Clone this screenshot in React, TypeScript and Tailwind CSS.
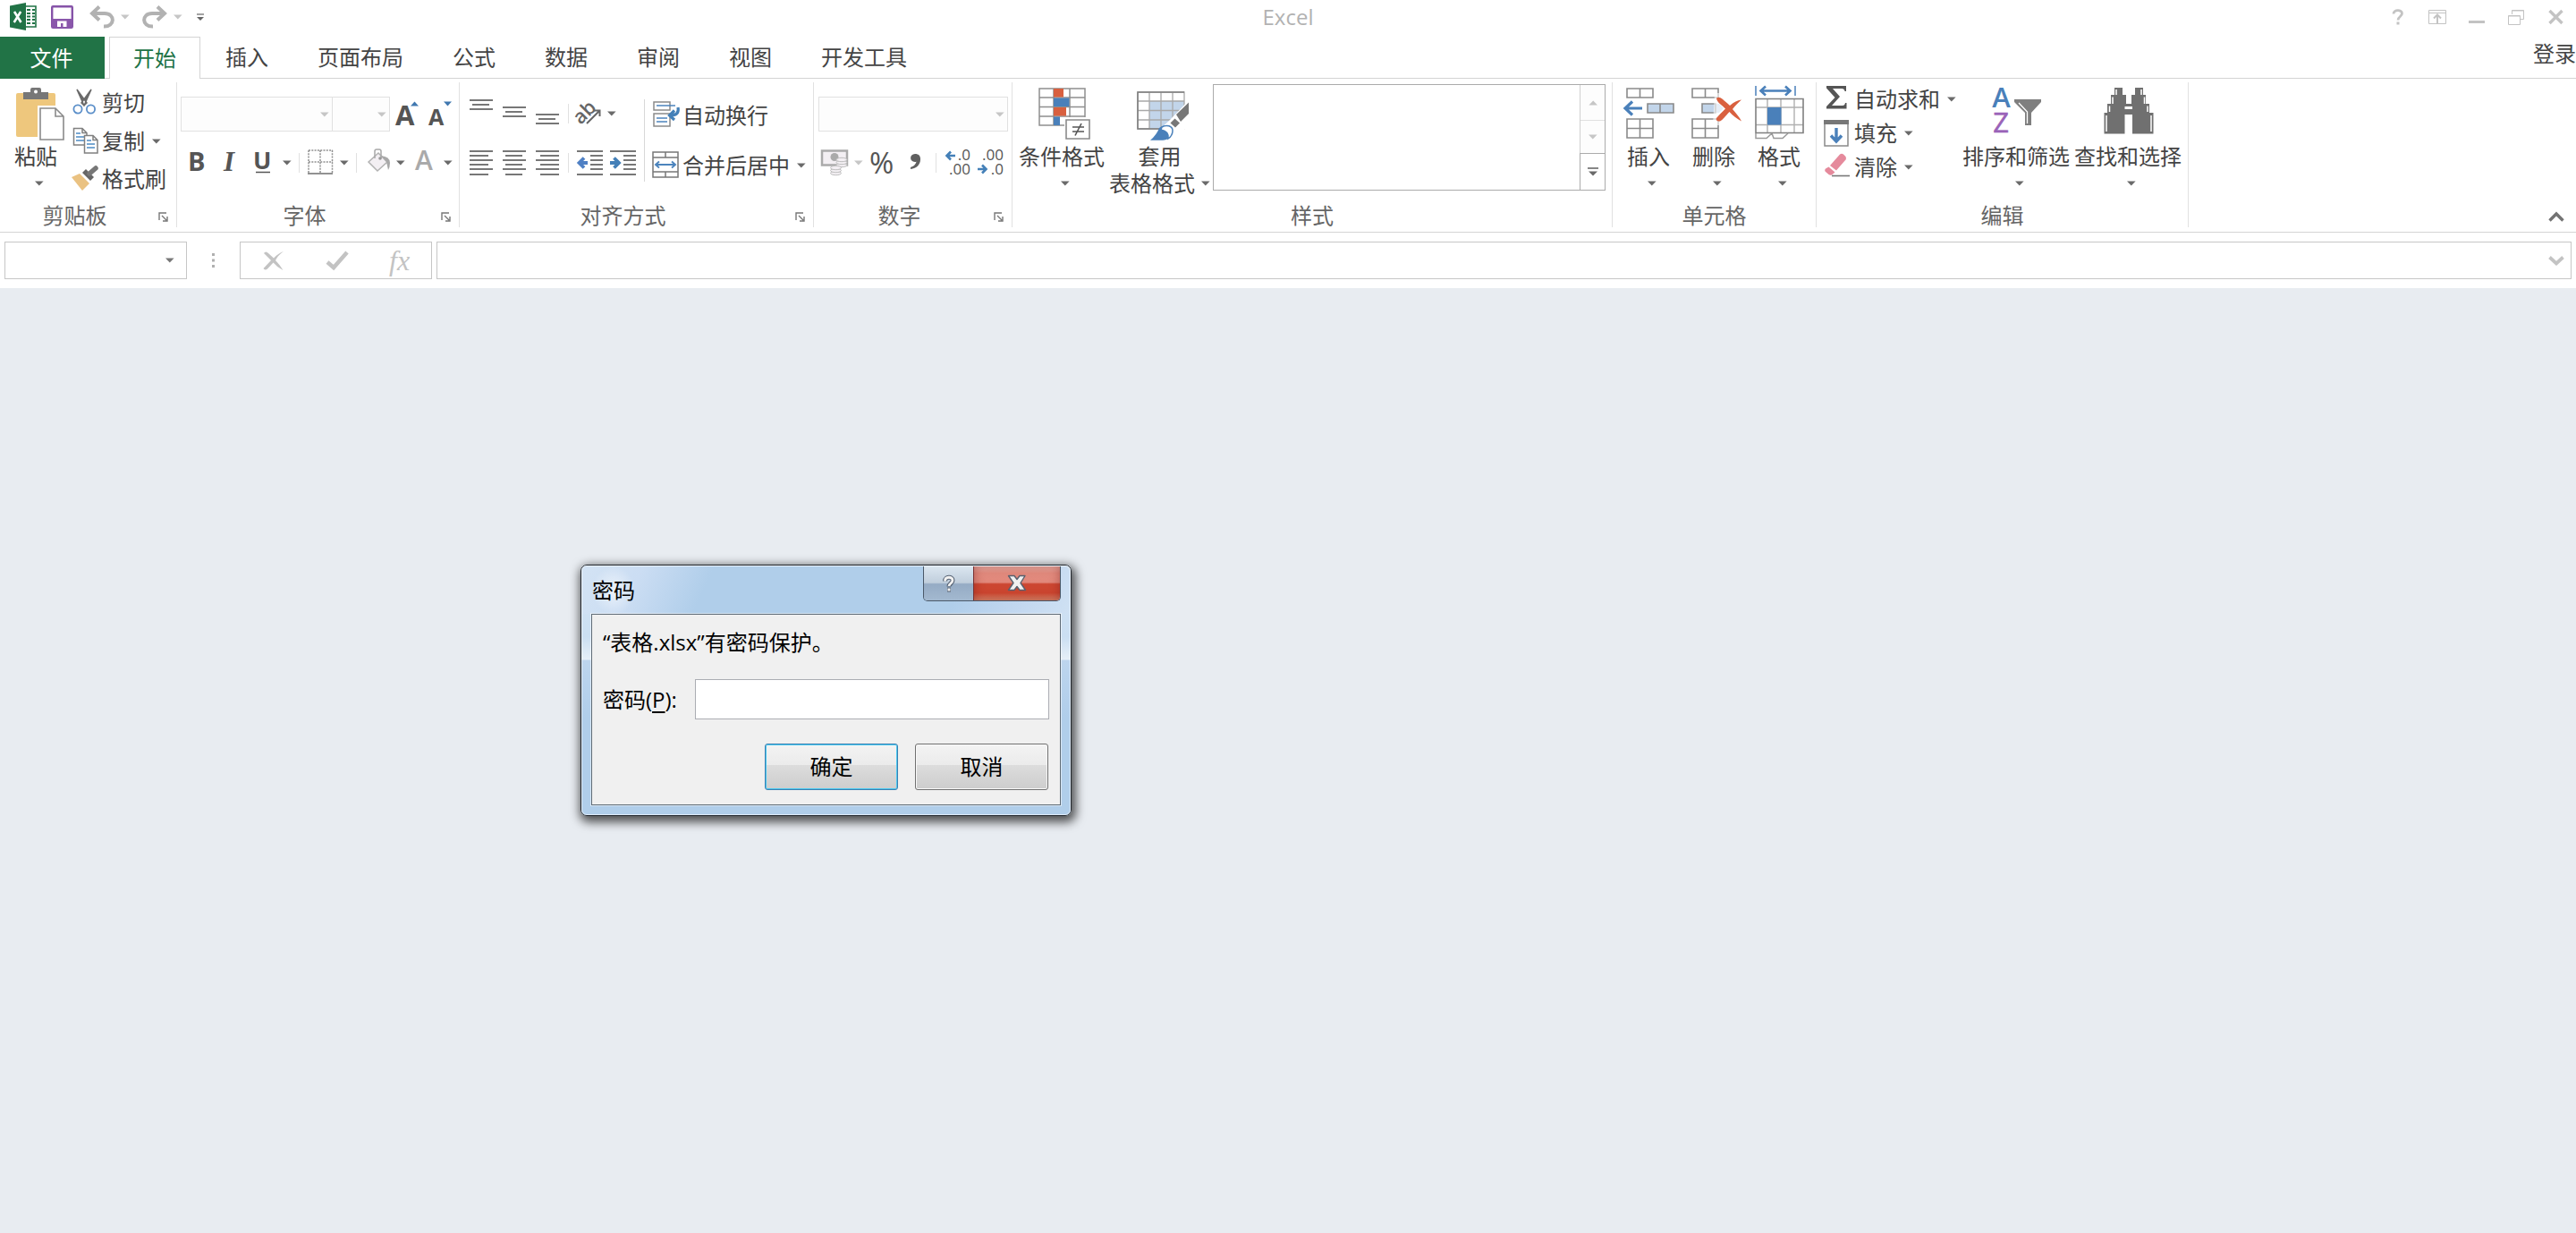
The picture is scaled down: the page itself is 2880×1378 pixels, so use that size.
import React from "react";

type Kids = { children?: React.ReactNode };

function Caret({ cls = "", color = "#6a6a6a" }: { cls?: string; color?: string }) {
  return (
    <svg width="10" height="6" viewBox="0 0 10 6" className={`shrink-0 ${cls}`} aria-hidden="true">
      <path d="M0 0.5H9.6L4.8 5.5Z" fill={color} />
    </svg>
  );
}

function Icon({ children, w = 30, h = 30, cls = "" }: Kids & { w?: number; h?: number; cls?: string }) {
  return (
    <svg width={w} height={h} viewBox={`0 0 ${w} ${h}`} fill="none" className={`shrink-0 overflow-visible ${cls}`} aria-hidden="true">
      {children}
    </svg>
  );
}

function Tool({ label, children, cls = "" }: Kids & { label: string; cls?: string }) {
  return (
    <button type="button" aria-label={label} className={`flex shrink-0 items-center ${cls}`}>
      {children}
    </button>
  );
}

function BigButton({ label, icon, children }: Kids & { label?: string; icon: React.ReactNode }) {
  return (
    <button type="button" className="flex shrink-0 flex-col items-center pt-1 text-2xl leading-[30px] text-[#444]">
      <Icon w={64} h={62} cls="mb-0.5">
        {icon}
      </Icon>
      {label ? (
        <>
          <span className="whitespace-nowrap">{label}</span>
          <span className="flex h-[30px] items-center pl-2">
            <Caret />
          </span>
        </>
      ) : (
        children
      )}
    </button>
  );
}

function RowButton({ label, icon, caret, cls = "" }: { label: string; icon: React.ReactNode; caret?: boolean; cls?: string }) {
  return (
    <button type="button" className={`flex items-center gap-1 text-2xl leading-[30px] whitespace-nowrap text-[#444] ${cls}`}>
      <Icon>{icon}</Icon>
      {label}
      {caret && <Caret cls="ml-1" />}
    </button>
  );
}

function Group({ title, launcher, children }: Kids & { title: string; launcher?: boolean }) {
  return (
    <section aria-label={title} className="flex shrink-0 flex-col border-r border-[#e1e1e1]">
      <div className="flex h-[136px] items-start">{children}</div>
      <div className="flex h-[26px] items-center">
        <h2 className="flex-1 text-center text-2xl leading-[26px] text-[#666]">{title}</h2>
        {launcher && (
          <button type="button" aria-label={`${title}设置`} className="w-[30px] pt-1 pl-2.5">
            <Icon w={12} h={12}>
              <path d="M1 9V1H9M4 4L9 9M10 5V10H5" stroke="#777" strokeWidth="1.4" />
            </Icon>
          </button>
        )}
      </div>
    </section>
  );
}

function Combo({ label, cls }: { label: string; cls: string }) {
  return (
    <div className={`relative h-[39px] ${cls}`}>
      <select aria-label={label} className="size-full appearance-none border border-[#e1e1e1] bg-[#fdfdfd]" />
      <span className="pointer-events-none absolute inset-y-0 right-1 flex items-center">
        <Caret color="#c6c6c6" />
      </span>
    </div>
  );
}

const Sep = () => <span className="mx-2 h-[22px] w-px shrink-0 bg-[#e1e1e1]" />;

function Lines({ rows }: { rows: [number, number, number][] }) {
  return (
    <Icon>
      {rows.map(([x1, x2, y]) => (
        <path key={y} d={`M${x1} ${y}H${x2}`} stroke="#777" strokeWidth="2" />
      ))}
    </Icon>
  );
}

function CellsGrid({ x }: { x: number }) {
  return (
    <g stroke="#8a8a8a" strokeWidth="1.6">
      <path d={`M${x} 3H${x + 29}V13H${x}ZM${x + 14.5} 3V13`} />
      <path d={`M${x} 37H${x + 29}V58H${x}ZM${x + 14.5} 37V58M${x} 47.5H${x + 29}`} />
    </g>
  );
}

function TitleBar() {
  const idle = "#b2b2b2";
  return (
    <header className="grid h-[41px] grid-cols-[1fr_auto_1fr] items-center">
      <div className="flex items-center pb-1 pl-[11px]">
        <Icon w={31} h={31}>
          <path d="M17 4H29V27H17" fill="#fff" stroke="#217346" strokeWidth="1.6" />
          <path d="M19 8H23M25 8H28M19 12H23M25 12H28M19 15.5H23M25 15.5H28M19 19H23M25 19H28M19 23H23M25 23H28" stroke="#217346" strokeWidth="2" />
          <path d="M0 3.5L18 0V31L0 27.5Z" fill="#217346" />
          <path d="M5 10L12.5 22M12.2 10L4.7 22" stroke="#fff" strokeWidth="2.6" />
        </Icon>
        <Tool label="保存" cls="ml-[15px]">
          <Icon w={25} h={26}>
            <rect x="1.2" y="1.2" width="22.6" height="23.6" rx="1" fill="#fff" stroke="#8653a8" strokeWidth="2.4" />
            <path d="M1 15H24V25H1Z" fill="#8a57ab" />
            <path d="M7 17.5H17.5V24H13.5V20H11V24H7Z" fill="#fff" />
          </Icon>
        </Tool>
        <Tool label="撤消" cls="ml-[18px]">
          <Icon w={28} h={26}>
            <path d="M2 9H17C29 9 29 24 16 23.5" stroke={idle} strokeWidth="4" />
            <path d="M11 1.5L3 9L11 16.5" stroke={idle} strokeWidth="4" />
          </Icon>
          <Caret cls="ml-[7px]" color="#c6c6c6" />
        </Tool>
        <Tool label="恢复" cls="ml-3.5">
          <Icon w={28} h={26}>
            <path d="M26 9H11C-1 9 -1 24 12 23.5" stroke={idle} strokeWidth="4" />
            <path d="M17 1.5L25 9L17 16.5" stroke={idle} strokeWidth="4" />
          </Icon>
          <Caret cls="ml-[7px]" color="#c6c6c6" />
        </Tool>
        <Tool label="自定义快速访问工具栏" cls="ml-4">
          <Icon w={8} h={8}>
            <path d="M0 1H8" stroke="#666" strokeWidth="1.2" />
            <path d="M0 4H8L4 8Z" fill="#666" />
          </Icon>
        </Tool>
      </div>
      <h1 className="pb-1 text-2xl leading-8 text-[#b2b2b2]">Excel</h1>
      <div className="flex items-center justify-end pr-[14px] pb-1 text-[#c3c3c3]">
        <Tool label="帮助">
          <Icon w={14} h={18}>
            <path d="M2 5.5C2 0.5 11.5 0.5 11.5 5C11.5 8.5 7 8.5 7 12.5" stroke="currentColor" strokeWidth="2.8" />
            <path d="M5.5 14.5H8.5V17.5H5.5Z" fill="currentColor" />
          </Icon>
        </Tool>
        <Tool label="功能区显示选项" cls="ml-[27px]">
          <Icon w={20} h={16}>
            <path d="M0.5 0.5H19.5V15.5H0.5ZM0.5 3.5H19.5" stroke="currentColor" />
            <path d="M10 15V6M6 9.5L10 5.5L14 9.5" stroke="currentColor" strokeWidth="2" />
          </Icon>
        </Tool>
        <Tool label="最小化" cls="ml-[25px]">
          <Icon w={18} h={18}>
            <path d="M0 14.5H18" stroke="currentColor" strokeWidth="3" />
          </Icon>
        </Tool>
        <Tool label="还原" cls="ml-[26px]">
          <Icon w={18} h={18}>
            <path d="M4.5 6V1.5H17.5V11.5H14M4.5 2H17.5M0.5 7.5H13.5V17.5H0.5ZM0.5 8H13.5" stroke="currentColor" />
          </Icon>
        </Tool>
        <Tool label="关闭" cls="ml-[27px]">
          <Icon w={17} h={16}>
            <path d="M1.5 1L15.5 15M15.5 1L1.5 15" stroke="currentColor" strokeWidth="3.4" />
          </Icon>
        </Tool>
      </div>
    </header>
  );
}

function TabRow() {
  const tabs = ["插入", "页面布局", "公式", "数据", "审阅", "视图", "开发工具"];
  return (
    <nav aria-label="功能区选项卡" className="flex h-[47px] border-b border-[#d4d4d4] text-2xl text-[#444]">
      <button type="button" className="-mb-px w-[117px] bg-[#217346] pr-0.5 text-white">文件</button>
      <button type="button" className="-mb-px ml-[5px] border border-b-0 border-[#d4d4d4] bg-white px-[26px] text-[#217346]">开始</button>
      <div className="ml-px flex gap-px">
        {tabs.map((t) => (
          <button key={t} type="button" className="px-[27px]">{t}</button>
        ))}
      </div>
      <a href="#login" className="ml-auto leading-[38px]">登录</a>
    </nav>
  );
}

function Ribbon() {
  return (
    <div className="flex border-b border-[#d4d4d4] pt-1 pb-[5px]">
      <Group title="剪贴板" launcher>
        <div className="flex pr-[11px] pl-2">
          <BigButton
            label="粘贴"
            icon={
              <>
                <rect x="10" y="8" width="44" height="49" rx="2" fill="#eec77d" />
                <path d="M18 15V7H26V4Q26 2 28 2H36Q38 2 38 4V7H46V15Z" fill="#777" />
                <circle cx="32" cy="6.5" r="2" fill="#fff" />
                <path d="M34 22H57L66 31V63H34Z" fill="#fff" />
                <path d="M37 25H54L63 34V60H37ZM54 25V34H63" fill="#fff" stroke="#8a8a8a" strokeWidth="1.6" />
              </>
            }
          />
          <div className="flex flex-col pt-px pl-2">
            <RowButton
              label="剪切"
              cls="h-[43px]"
              icon={
                <>
                  <path d="M6 0L17 15L14 18Z M22 0L11 15L14 18Z" fill="#6a6a6a" stroke="#6a6a6a" strokeWidth="1.5" />
                  <circle cx="7" cy="22" r="4.6" stroke="#5b8fc9" strokeWidth="1.8" />
                  <circle cx="21.5" cy="22" r="4.6" stroke="#5b8fc9" strokeWidth="1.8" />
                </>
              }
            />
            <RowButton
              label="复制"
              caret
              cls="h-[43px] pr-1"
              icon={
                <>
                  <path d="M2.5 0.5H12L17 5.5V19H2.5ZM12 0.5V5.5H17" fill="#fff" stroke="#808080" strokeWidth="1.5" />
                  <path d="M5 6H10M5 10H14M5 14H14" stroke="#4c8ac4" strokeWidth="1.5" />
                  <path d="M14.5 8.5H24L29 13.5V28H14.5ZM24 8.5V13.5H29" fill="#fff" stroke="#808080" strokeWidth="1.5" />
                  <path d="M17 14H22M17 18H26M17 22H26" stroke="#4c8ac4" strokeWidth="1.5" />
                </>
              }
            />
            <RowButton
              label="格式刷"
              cls="h-[42px]"
              icon={
                <>
                  <path d="M0 13L9 9L20 20L12 28Z" fill="#eac282" />
                  <path d="M12 8L16 4L25 13L21 17Z" fill="#666" />
                  <path d="M20 9L27 3" stroke="#777" strokeWidth="5.5" strokeLinecap="round" />
                </>
              }
            />
          </div>
        </div>
      </Group>

      <Group title="字体" launcher>
        <div className="pt-4 pr-1 pl-1">
          <div className="flex items-center">
            <Combo label="字体" cls="w-[170px]" />
            <Combo label="字号" cls="-ml-px w-[65px]" />
            <Tool label="增大字号" cls="ml-1.5">
              <Icon>
                <text x="0" y="27" fontSize="31" fontWeight="700" fill="#555" className="font-['Open_Sans']">A</text>
                <path d="M17 5.5L21.5 0.5L26 5.5Z" fill="#4178b0" />
              </Icon>
            </Tool>
            <Tool label="减小字号" cls="ml-[7px]">
              <Icon>
                <text x="0" y="27" fontSize="25" fontWeight="700" fill="#555" className="font-['Open_Sans']">A</text>
                <path d="M17 0.5H26L21.5 5.5Z" fill="#4178b0" />
              </Icon>
            </Tool>
          </div>
          <div className="mt-5 flex items-center pl-[5px]">
            <Tool label="加粗">
              <Icon>
                <text x="3" y="24" fontSize="29" fontWeight="700" fill="#555" className="font-['Open_Sans']">B</text>
              </Icon>
            </Tool>
            <Tool label="倾斜" cls="ml-[7px]">
              <Icon>
                <text x="6" y="24" fontSize="31" fontWeight="700" fontStyle="italic" fill="#555" className="font-['Liberation_Serif']">I</text>
              </Icon>
            </Tool>
            <Tool label="下划线" cls="ml-[7px]">
              <Icon>
                <text x="2" y="22" fontSize="27" fontWeight="700" fill="#555" className="font-['Open_Sans']">U</text>
                <path d="M5 25.5H21" stroke="#555" strokeWidth="1.5" />
              </Icon>
              <Caret cls="ml-[5px]" />
            </Tool>
            <Sep />
            <Tool label="边框">
              <Icon>
                <path d="M2 1H29M2 14H29M2 1V26M15 1V26M28.5 1V26" stroke="#909090" strokeWidth="1.5" strokeDasharray="2 1.3" />
                <path d="M1 27H29" stroke="#777" strokeWidth="1.6" />
              </Icon>
              <Caret cls="ml-[7px]" />
            </Tool>
            <Sep />
            <Tool label="填充颜色">
              <Icon>
                <path d="M5 14L16 4L26 14L15 24Z" fill="#f3eff3" stroke="#b2b2b2" strokeWidth="1.5" />
                <path d="M12 10V2Q12 0 14 0H17Q19 0 19 2V10" stroke="#a8a8a8" strokeWidth="1.5" />
                <circle cx="18" cy="10" r="1.8" fill="#999" />
                <path d="M19 7Q29 8 29 15Q29 20 27 23Q26 18 25 14Z" fill="#a8a8a8" />
              </Icon>
              <Caret cls="ml-1.5" />
            </Tool>
            <Tool label="字体颜色" cls="ml-1.5">
              <Icon>
                <text x="5" y="23" fontSize="30" fontWeight="600" fill="#aaa" className="font-['Open_Sans']">A</text>
              </Icon>
              <Caret cls="ml-[7px]" />
            </Tool>
          </div>
        </div>
      </Group>

      <Group title="对齐方式" launcher>
        <div className="flex pr-2 pl-[9px]">
          <div className="pt-5">
            <div className="flex items-center">
              <div className="flex gap-[7px]">
                <Tool label="顶端对齐"><Lines rows={[[2, 28, 0], [5, 24, 5], [2, 28, 10]]} /></Tool>
                <Tool label="垂直居中"><Lines rows={[[2, 28, 8], [5, 24, 13], [2, 28, 18]]} /></Tool>
                <Tool label="底端对齐"><Lines rows={[[2, 28, 16], [5, 24, 21], [2, 28, 26]]} /></Tool>
              </div>
              <Sep />
              <Tool label="方向">
                <Icon>
                  <text x="-1" y="23" fontSize="22" fontWeight="600" fill="#666" transform="rotate(-45 8 18)" className="font-['Open_Sans']">ab</text>
                  <path d="M12 26L26 12M20 11.5H26.5V18" stroke="#666" strokeWidth="2" />
                </Icon>
                <Caret cls="ml-[5px]" />
              </Tool>
            </div>
            <div className="mt-[25px] flex items-center">
              <div className="flex gap-[7px]">
                <Tool label="左对齐"><Lines rows={[[2, 28, 2], [2, 23, 7], [2, 28, 12], [2, 23, 17], [2, 28, 22], [2, 23, 28]]} /></Tool>
                <Tool label="居中"><Lines rows={[[2, 28, 2], [5, 24, 7], [2, 28, 12], [5, 24, 17], [2, 28, 22], [5, 24, 28]]} /></Tool>
                <Tool label="右对齐"><Lines rows={[[2, 28, 2], [7, 28, 7], [2, 28, 12], [7, 28, 17], [2, 28, 22], [7, 28, 28]]} /></Tool>
              </div>
              <Sep />
              <Tool label="减少缩进量">
                <Icon>
                  <path d="M1 2H30M16 7H30M16 12H30M16 17H30M16 22H30M1 28H30" stroke="#777" strokeWidth="1.8" />
                  <path d="M3 15H13M9 9.5L3.5 15L9 20.5" stroke="#4f80c4" strokeWidth="3.8" />
                </Icon>
              </Tool>
              <Tool label="增加缩进量" cls="ml-[7px]">
                <Icon>
                  <path d="M1 2H30M16 7H30M16 12H30M16 17H30M16 22H30M1 28H30" stroke="#777" strokeWidth="1.8" />
                  <path d="M1 15H11M5.5 9.5L11 15L5.5 20.5" stroke="#4480b8" strokeWidth="3.8" />
                </Icon>
              </Tool>
            </div>
          </div>
          <span className="mt-[19px] mr-2 ml-[9px] h-[92px] w-px bg-[#d8d8d8]" />
          <div className="flex flex-col gap-[26px] pt-[22px]">
            <RowButton
              label="自动换行"
              icon={
                <>
                  <path d="M2 0H20V9H2ZM2 13H20V27H2Z" stroke="#8a8a8a" strokeWidth="1.5" />
                  <path d="M5 4H26M5 18H17M5 22H17" stroke="#4c84bd" strokeWidth="1.6" />
                  <path d="M29 6Q31 15 20 15M25 9.5L19.5 15L25 20" stroke="#4480b8" strokeWidth="3.2" />
                </>
              }
            />
            <RowButton
              label="合并后居中"
              caret
              icon={
                <>
                  <path d="M1 0H29V28H1ZM1 6H29M1 22H29M15 0V6M15 22V28" stroke="#777" strokeWidth="1.5" />
                  <path d="M4 14H26M8 10.5L4 14L8 17.5M22 10.5L26 14L22 17.5" stroke="#4c84bd" strokeWidth="1.9" />
                </>
              }
            />
          </div>
        </div>
      </Group>

      <Group title="数字" launcher>
        <div className="pt-4 pr-1 pl-[5px]">
          <Combo label="数字格式" cls="w-[212px]" />
          <div className="mt-5 flex items-center pl-[3px]">
            <Tool label="会计数字格式">
              <Icon>
                <rect x="1" y="1.5" width="28" height="16" fill="#f3eff3" stroke="#aaa" strokeWidth="2.5" />
                <circle cx="15" cy="8.5" r="4.5" fill="#aaa" />
                <g fill="#f3eff3" stroke="#bdbdbd">
                  <ellipse cx="23" cy="17.5" rx="6" ry="2.2" />
                  <ellipse cx="23" cy="14.5" rx="6" ry="2.2" />
                  <ellipse cx="23" cy="11.5" rx="6" ry="2.2" />
                  <ellipse cx="16.5" cy="26.5" rx="6" ry="2.2" />
                  <ellipse cx="16.5" cy="23.5" rx="6" ry="2.2" />
                  <ellipse cx="16.5" cy="20.5" rx="6" ry="2.2" />
                </g>
              </Icon>
              <Caret cls="ml-[7px]" color="#c6c6c6" />
            </Tool>
            <Tool label="百分比样式" cls="ml-1.5">
              <Icon>
                <text x="1" y="27" fontSize="33" fill="#555" className="font-['Open_Sans']">%</text>
              </Icon>
            </Tool>
            <Tool label="千位分隔样式" cls="ml-[7px]">
              <Icon>
                <path d="M15 5C8.5 5 8.5 14 15 14C16 14 16 14 16.5 13.5C16 17 13 19 10 20V22C17 21 21 17 21 11C21 7 19 5 15 5Z" fill="#606060" />
              </Icon>
            </Tool>
            <Sep />
            <Tool label="增加小数位数">
              <Icon>
                <text fontSize="17" textAnchor="end" fill="#555" className="font-['Open_Sans']">
                  <tspan x="30" y="12">.0</tspan>
                  <tspan x="30" y="28">.00</tspan>
                </text>
                <path d="M3 7H13M8 2.5L3.5 7L8 11.5" stroke="#4480b8" strokeWidth="2.6" />
              </Icon>
            </Tool>
            <Tool label="减少小数位数" cls="ml-[7px]">
              <Icon>
                <text fontSize="17" textAnchor="end" fill="#555" className="font-['Open_Sans']">
                  <tspan x="30" y="12">.00</tspan>
                  <tspan x="30" y="28">.0</tspan>
                </text>
                <path d="M1 22H11M6 17.5L10.5 22L6 26.5" stroke="#4480b8" strokeWidth="2.6" />
              </Icon>
            </Tool>
          </div>
        </div>
      </Group>

      <Group title="样式">
        <div className="flex items-start pr-[7px] pl-[7px]">
          <BigButton
            label="条件格式"
            icon={
              <>
                <path d="M7 3H58V44H7ZM23 3V44M41 3V44M7 13H58M7 23.5H58M7 34H58" fill="#fff" stroke="#8f8f8f" strokeWidth="1.5" />
                <path d="M23 3H34V12.5H23ZM23 24H37V33.5H23Z" fill="#d8603f" />
                <path d="M23 13.5H40.5V23H23ZM23 34.5H30V44H23Z" fill="#4a80ba" />
                <path d="M35 35H66V62H35Z" fill="#fff" />
                <path d="M37 38H63V59H37Z" fill="#fff" stroke="#8a8a8a" strokeWidth="1.6" />
                <path d="M44 46H57M44 51H57M54 42L47 55.5" stroke="#555" strokeWidth="1.6" />
              </>
            }
          />
          <div className="ml-[5px]">
            <BigButton
              icon={
                <>
                  <path d="M20 17H59V48H20Z" fill="#c2d5ea" />
                  <path d="M7 7H59V48H7ZM20 7V48M33 7V48M46 7V48M7 17H59M7 27.5H59M7 38H59" stroke="#a8a8a8" strokeWidth="1.3" />
                  <path d="M59 48H7V7H59" stroke="#808080" strokeWidth="1.6" />
                  <path d="M66 14L43 38L17 62H50L66 40Z" fill="#fff" />
                  <path d="M64 18.5V31L55 40L50 32Z" fill="#777" />
                  <path d="M48.5 36.5L54 41.5L49 46.5L43.5 41.5Z" fill="#777" />
                  <path d="M21 60.7Q28 55 31 47C37 42 46 43 46 50C46 57 40 60.7 35 60.7Z" fill="#4a80ba" />
                  <path d="M34 46C39 43 46 44.5 46 50C46 54 44 57 41 59C42 53 38 50 33 49Z" fill="#fff" stroke="#4a80ba" strokeWidth="1.5" />
                </>
              }
            >
              <span>套用</span>
              <span className="flex items-center gap-[7px] whitespace-nowrap">
                表格格式
                <Caret />
              </span>
            </BigButton>
          </div>
          <div className="mt-0.5 ml-[3px] flex h-[119px] w-[439px] border border-[#ababab]">
            <div className="flex-1" />
            <div className="flex w-7 flex-col border-l border-[#d0d0d0]">
              <Tool label="向上滚动" cls="h-10 justify-center border-b border-[#e1e1e1] bg-[#fdfdfd]">
                <Caret cls="rotate-180" color="#c6c6c6" />
              </Tool>
              <Tool label="向下滚动" cls="h-9 justify-center bg-[#fdfdfd]">
                <Caret color="#c6c6c6" />
              </Tool>
              <Tool label="其他样式" cls="-ml-px flex-1 justify-center border-t border-l border-[#ababab]">
                <Icon w={12} h={10}>
                  <path d="M0 1H12" stroke="#6a6a6a" strokeWidth="1.6" />
                  <path d="M1 4.5H11L6 9.5Z" fill="#6a6a6a" />
                </Icon>
              </Tool>
            </div>
          </div>
        </div>
      </Group>

      <Group title="单元格">
        <div className="flex gap-[9px] pr-[9px] pl-2">
          <BigButton
            label="插入"
            icon={
              <>
                <CellsGrid x={8} />
                <path d="M31 20H60V30H31ZM45 20V30" fill="#c2d5ea" stroke="#8a8a8a" strokeWidth="1.6" />
                <path d="M6 25H25M14 17.5L6 25L14 32.5" stroke="#4a80ba" strokeWidth="3.2" />
              </>
            }
          />
          <BigButton
            label="删除"
            icon={
              <>
                <CellsGrid x={8} />
                <path d="M19 20H34V30H19Z" fill="#c2d5ea" stroke="#8a8a8a" strokeWidth="1.6" />
                <path d="M35 20H38L43 25L38 30H35Z" fill="#c2d5ea" />
                <path d="M33 8H44L50 20V30L38 44H31Z" fill="#fff" opacity="0.6" />
                <path d="M35 14C38 11 41 14 50 22C55 18 58 16 63 15.5C60 18 56 22 53 26C57 31 61 35 63 39.5C58 37 53 33 49.5 29C45 34 42 38 39 39.5C36 40 34 38 35 36C38 32 42 29 45 25.5C41 21 36 19 35 14Z" fill="#d9603f" />
              </>
            }
          />
          <BigButton
            label="格式"
            icon={
              <>
                <path d="M6 0V11M50 0V11" stroke="#4a80ba" strokeWidth="1.5" />
                <path d="M11 5.5H45M17 0.5L11.5 5.5L17 10.5M39 0.5L44.5 5.5L39 10.5" stroke="#4a80ba" strokeWidth="2.6" />
                <path d="M19 14V53M34 14V53M49 14V53M6 24H59M6 43.5H59" stroke="#b0b0b0" strokeWidth="1.4" />
                <path d="M6 14.5H59V52.5H6Z" stroke="#808080" strokeWidth="1.6" />
                <path d="M19 24H34.5V43.5H19Z" fill="#4a80ba" />
                <path d="M6 53V58.5H18L24 53M24 53L26 58.5H36L42 53" stroke="#9a9a9a" strokeWidth="1.5" />
              </>
            }
          />
        </div>
      </Group>

      <Group title="编辑">
        <div className="flex pr-[7px] pl-2">
          <div className="flex flex-col">
            <RowButton
              label="自动求和"
              caret
              cls="h-[38px]"
              icon={<path d="M3 0H25V6H23.5Q23 3 20 3H10L18 12L9 22H21Q23.5 22 24 19H25.5V25.5H3V23L12.5 13L3 2.5Z" fill="#555" />}
            />
            <RowButton
              label="填充"
              caret
              cls="h-[38px]"
              icon={
                <>
                  <path d="M1 1H27V29H1Z" fill="#fff" stroke="#8a8a8a" strokeWidth="1.5" />
                  <path d="M0 0H28V5H0Z" fill="#777" />
                  <path d="M14 9V24M8 17.5L14 24L20 17.5" stroke="#4a80ba" strokeWidth="3.4" />
                </>
              }
            />
            <RowButton
              label="清除"
              caret
              cls="h-[38px]"
              icon={
                <>
                  <path d="M7 13L18 0.5Q20 -1 22 0.5L24.5 3Q25.5 5 24.5 6.5L14 18.5Z" fill="#e58a9c" />
                  <path d="M5.5 14.5L12.5 20.5L9 23.5Q7 24 5.5 23L1.5 19.5Q0.5 18 2 16.5Z" fill="#e58a9c" />
                  <path d="M9 24.5H29" stroke="#777" strokeWidth="1.6" />
                </>
              }
            />
          </div>
          <div className="flex gap-[5px] pl-[7px]">
            <BigButton
              label="排序和筛选"
              icon={
                <>
                  <text fontSize="31" textAnchor="middle" className="font-['Open_Sans']">
                    <tspan x="15.5" y="24" fontWeight="600" fill="#4a80ba">A</tspan>
                    <tspan x="15" y="52" fill="#9a63b8" stroke="#9a63b8" strokeWidth="0.6">Z</tspan>
                  </text>
                  <path d="M30 15H60V18L49 30V44H42V30L30 18Z" fill="#7f7f7f" />
                  <path d="M35 19L44.5 29V42" stroke="#fff" strokeWidth="1.3" />
                </>
              }
            />
            <BigButton
              label="查找和选择"
              icon={
                <>
                  <path d="M17 2H26V10H30V20H36V10H40V2H49V10H52V20H56V30H60.5V53.5H37V32H28.5V53.5H5.5V30H9V20H13V10H17Z" fill="#707070" />
                  <path d="M28.5 23H37V26H28.5Z" fill="#fff" />
                  <path d="M19 4V10M15 12.5V20M11.5 22.5V29M8 33V51M47 4V10M50.5 12.5V20M54 22.5V29M58 33V51" stroke="#fff" strokeWidth="1.5" />
                </>
              }
            />
          </div>
        </div>
      </Group>

      <button type="button" aria-label="折叠功能区" className="mr-[13px] mb-1.5 ml-auto self-end">
        <Icon w={18} h={11}>
          <path d="M1.5 9.5L9 2L16.5 9.5" stroke="#737373" strokeWidth="3.4" />
        </Icon>
      </button>
    </div>
  );
}

function FormulaBar() {
  return (
    <div className="flex h-[62px] items-center px-[5px]">
      <div className="relative h-[42px] w-[204px]">
        <input aria-label="名称框" className="size-full border border-[#c6c6c6] bg-white px-2 pr-8 text-2xl" />
        <button type="button" aria-label="名称列表" className="absolute inset-y-0 right-3.5 flex items-center">
          <Caret color="#777" />
        </button>
      </div>
      <Icon w={3} h={16} cls="mx-7">
        <path d="M0 1.5H3M0 8H3M0 14.5H3" stroke="#b0b0b0" strokeWidth="3" />
      </Icon>
      <div className="flex h-[42px] w-[215px] items-center border border-[#c6c6c6] text-[#c3c3c3]">
        <Tool label="取消输入" cls="ml-[25px]">
          <Icon w={23} h={22}>
            <path d="M1 3Q3 0 6 3L12 8.5Q17 3 23 1Q17 5 14 11Q19 16 22.5 22Q16 19 11.5 13.5L5 20.5Q2 22.5 0.5 20L9 11Z" fill="currentColor" />
          </Icon>
        </Tool>
        <Tool label="输入" cls="ml-[47px]">
          <Icon w={26} h={22}>
            <path d="M2 13L9 19L24 2" stroke="currentColor" strokeWidth="4.5" />
          </Icon>
        </Tool>
        <Tool label="插入函数" cls="ml-[45px]">
          <span className="font-['Liberation_Serif'] text-[32px] leading-8 italic">fx</span>
        </Tool>
      </div>
      <div className="relative ml-[5px] h-[42px] flex-1">
        <input aria-label="编辑栏" className="size-full border border-[#c6c6c6] bg-white px-2 text-2xl" />
        <button type="button" aria-label="展开编辑栏" className="absolute inset-y-0 right-2 flex items-center">
          <Icon w={18} h={11}>
            <path d="M1.5 1.5L9 8.5L16.5 1.5" stroke="#c3c3c3" strokeWidth="3.8" />
          </Icon>
        </button>
      </div>
    </div>
  );
}

function PasswordDialog() {
  const push = "flex h-[52px] w-[149px] items-center justify-center rounded-[3px] border text-2xl bg-[linear-gradient(to_bottom,#f3f3f3_0%,#ebebeb_46%,#dcdcdc_47%,#cdcdcd_100%)]";
  return (
    <div
      role="dialog"
      aria-labelledby="dialog-title"
      className="absolute top-[631px] left-[649px] w-[549px] rounded-[7px] border border-[#20262d] bg-[linear-gradient(to_bottom,#d2e3f4_0px,#cbdff2_80px,#e6eff8_105px,#bdd5ee_106px,#b0ceea_170px,#b0ceea_100%)] font-['Open_Sans','Noto_Sans_CJK_SC',sans-serif] text-black shadow-[2px_4px_11px_3px_rgba(0,0,0,0.65)]"
    >
      <div className="rounded-md border border-white/60 px-2.5 pb-2.5">
        <div className="-mx-2.5 flex h-[53px] items-start justify-between rounded-t-md bg-[linear-gradient(115deg,#d3e3f4_0%,#cbddf3_12%,#b0ceea_26%,#b0ceea_76%,#c3d8f0_90%,#cfe1f3_100%)] pr-2.5 pl-[11px]">
          <h2 id="dialog-title" className="bg-[radial-gradient(closest-side,rgba(255,255,255,0.6),transparent)] text-2xl leading-[54px]">密码</h2>
          <div className="flex h-[39px] overflow-hidden rounded-b-[5px] border border-t-0 border-[#4a5868]">
            <button type="button" aria-label="帮助" className="flex w-14 items-center justify-center border-r border-[#7a3030] bg-[linear-gradient(to_bottom,#dbe6f0_0%,#c0cedc_48%,#95abc4_52%,#a3b9d0_100%)]">
              <Icon w={14} h={19}>
                <path d="M2.5 6.5C2.5 1 11 1 11 5.5C11 9 7 9 7 12.5M5 16H9" stroke="#566273" strokeWidth="5" />
                <path d="M2.5 6.5C2.5 1 11 1 11 5.5C11 9 7 9 7 12M5.5 16H8.5" stroke="#f2f2f2" strokeWidth="2.8" />
              </Icon>
            </button>
            <button type="button" aria-label="关闭" className="flex w-24 items-center justify-center bg-[linear-gradient(to_bottom,#eeb5ab_0%,#e38c7f_20%,#e1877a_47%,#cc4631_52%,#cc4630_78%,#dd8a6c_100%)] shadow-[inset_0_0_12px_rgba(110,20,20,0.45)]">
              <Icon w={20} h={18}>
                <path d="M0.5 0.5H7L10 4.5L13 0.5H19L14 8.5L19.5 16.5H13L10 12.5L7 16.5H0.5L6 8.5Z" fill="#f0f0f0" stroke="#59606e" strokeWidth="1.4" strokeLinejoin="round" />
              </Icon>
            </button>
          </div>
        </div>
        <form className="border border-[#5f6b76] bg-[#f0f0f0] px-3 pt-4 pb-4 shadow-[0_0_0_1px_rgba(255,255,255,0.5)]" onSubmit={(e) => e.preventDefault()}>
          <p className="text-2xl leading-[30px]">“表格.xlsx”有密码保护。</p>
          <div className="mt-[26px] flex items-center justify-between">
            <label htmlFor="pw" className="text-2xl leading-[30px]">
              密码(<span className="underline underline-offset-4">P</span>):
            </label>
            <input id="pw" type="password" className="h-[45px] w-[396px] border border-[#abadb3] bg-white px-2 text-2xl" />
          </div>
          <div className="mt-[27px] flex justify-end gap-[19px] pr-px">
            <button type="submit" className={`${push} border-[#3c7fb1] shadow-[inset_0_0_0_1px_#48c8f0]`}>确定</button>
            <button type="button" className={`${push} border-[#707070] shadow-[inset_0_0_0_1px_#f8f8f8]`}>取消</button>
          </div>
        </form>
      </div>
    </div>
  );
}

export default function App() {
  return (
    <div className="relative flex min-h-screen flex-col overflow-hidden bg-white font-['Open_Sans','Noto_Sans_CJK_SC',sans-serif]">
      <TitleBar />
      <TabRow />
      <Ribbon />
      <FormulaBar />
      <main className="flex-1 bg-[#e8ecf1]" />
      <PasswordDialog />
    </div>
  );
}
